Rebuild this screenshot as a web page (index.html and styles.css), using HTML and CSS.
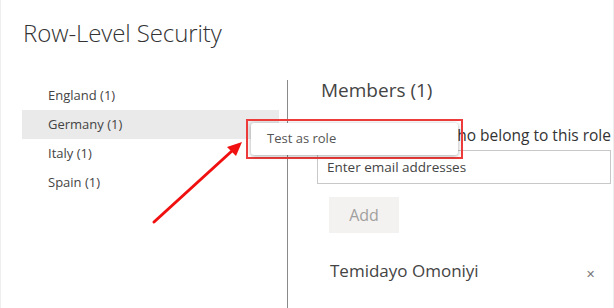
FILE: index.html
```html
<!DOCTYPE html>
<html>
<head>
<meta charset="utf-8">
<link rel="stylesheet" href="styles.css">
</head>
<body>
<div class="page">
  <h1 class="title">Row-Level Security</h1>
  <div class="main">
    <nav class="roles">
      <div class="role">England (1)</div>
      <div class="role selected">Germany (1)</div>
      <div class="role">Italy (1)</div>
      <div class="role">Spain (1)</div>
    </nav>
    <section class="pane">
      <h2 class="members">Members (1)</h2>
      <p class="hint"><span class="covered">People or groups w</span>ho belong to this role</p>
      <div class="input">Enter email addresses</div>
      <button class="add">Add</button>
      <div class="member">
        <span>Temidayo Omoniyi</span>
        <span class="close">&#x2715;</span>
      </div>
    </section>
  </div>
  <div class="callout">
    <div class="menu">Test as role</div>
  </div>
  <svg class="arrow" width="614" height="308" viewBox="0 0 614 308">
    <line x1="153" y1="222" x2="232" y2="150" stroke="#f01010" stroke-width="3" stroke-linecap="round"/>
    <polygon points="241,142 226,147 235,156" fill="#f01010"/>
  </svg>
</div>
</body>
</html>
```
FILE: styles.css
```css
* { box-sizing: border-box; }
html, body { margin: 0; padding: 0; background: #fff; }
body { font-family: "Open Sans", "Noto Sans", sans-serif; color: #333; }
.page { position: relative; width: 614px; height: 308px; overflow: hidden; border-left: 1px solid #eee; border-right: 1px solid #eee; }
.title { margin: 0; padding: 16px 0 0 22px; font-size: 24px; font-weight: 300; line-height: 34px; color: #333; letter-spacing: -0.1px; }
.main { display: flex; margin-top: 30px; height: 228px; }
.roles { flex: none; width: 286px; padding: 1px 8px 0 21px; }
.role { height: 29px; line-height: 29px; padding-left: 26px; font-size: 13px; color: #444; }
.role.selected { background: #eaeaea; }
.pane { flex: 1; min-width: 0; border-left: 1px solid #8a8a8a; padding: 0 0 0 29px; }
.members { margin: 0; font-size: 19px; font-weight: 400; line-height: 20px; color: #444; padding-left: 4px; }
.hint { margin: 24px 0 0; width: 294px; font-size: 15.5px; line-height: 22px; color: #333; white-space: nowrap; text-align: right; }
.covered { visibility: hidden; }
.input { margin-top: 4px; width: 294px; height: 34px; border: 1px solid #c8c8c8; padding-left: 9px; line-height: 32px; font-size: 13.5px; color: #444; }
.add { display: block; margin: 13px 0 0 12px; width: 70px; height: 36px; border: 0; background: #f3f2f1; color: #a19f9d; font-family: inherit; font-size: 16px; }
.member { display: flex; justify-content: space-between; align-items: center; margin-top: 25px; padding-left: 13px; width: 278px; height: 24px; font-size: 17px; color: #444; }
.close { font-size: 11px; color: #777; padding-top: 6px; }
.callout { position: absolute; left: 245px; top: 119px; width: 217px; height: 40px; border: 2px solid #ee3b3b; padding: 2px 3px 2px 3px; }
.menu { height: 100%; background: #fff; border-radius: 3px; box-shadow: 0 1px 4px rgba(0,0,0,0.35); padding-left: 16px; font-size: 13px; line-height: 30px; color: #555; }
.arrow { position: absolute; left: 0; top: 0; pointer-events: none; }
```
